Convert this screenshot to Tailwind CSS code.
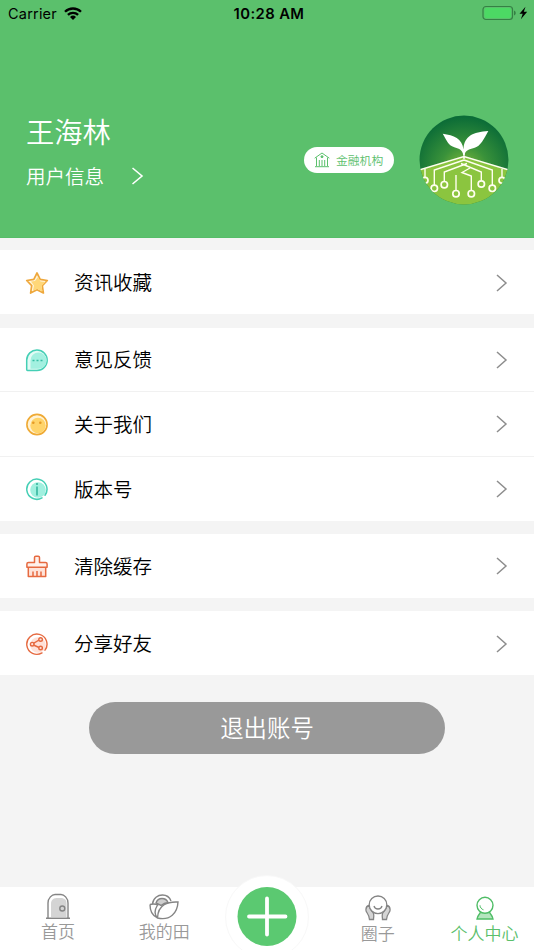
<!DOCTYPE html>
<html lang="zh-CN">
<head>
<meta charset="utf-8">
<meta name="viewport" content="width=device-width, initial-scale=1">
<title>个人中心</title>
<script src="https://cdn.jsdelivr.net/npm/@tailwindcss/browser@4"></script>
</head>
<body class="bg-[#f4f4f4]">
<div class="w-[534px] h-[950px] flex flex-col overflow-hidden font-['Noto_Sans_CJK_SC',sans-serif] text-black">

  <header class="h-[238px] shrink-0 bg-[#5bc06c] border-b border-[#56bd68] flex flex-col">
    <div class="h-7 grid grid-cols-3 items-center pl-2 pr-[6px] font-['Inter',sans-serif]">
      <div class="flex items-center gap-[7px] text-[14.5px] leading-7 tracking-[0.2px]">
        <span>Carrier</span>
        <svg class="w-[18px] h-[13px] -mt-[2px]" viewBox="0 0 18 13" fill="none" stroke="#000" stroke-width="2.3"><path d="M1 4.8a11.4 11.4 0 0 1 16 0M3.9 7.9a7.3 7.3 0 0 1 10.2 0"/><path d="M9 13 6 10a4.3 4.3 0 0 1 6 0z" fill="#000" stroke="none"/></svg>
      </div>
      <div class="text-center pl-[2px] text-[14.8px] font-semibold leading-7 tracking-[0.4px] whitespace-nowrap">10:28 AM</div>
      <div class="flex justify-end -mt-[2px]">
        <svg class="w-[46px] h-[16px]" viewBox="0 0 46 16"><rect x="1" y="1.5" width="29.5" height="13" rx="3" fill="none" stroke="#358044" stroke-width="1.2"/><rect x="2.5" y="3" width="26.5" height="10" rx="1.8" fill="#4cd964"/><path d="M32 5.5c2.3.8 2.3 4.2 0 5z" fill="#358044"/><path d="M43.5 1.8 37.5 8.7h3.2l-1.8 5.5 6.3-7.4h-3.4z" fill="#000"/></svg>
      </div>
    </div>
    <div class="flex items-start pl-[26px] pr-[25px] pt-[82px] text-white">
      <div class="flex-1 font-[350]">
        <div class="text-[28.3px] leading-[42px]">王海林</div>
        <div class="mt-[9px] flex items-center text-[19.5px] leading-[30px]">用户信息
          <svg class="ml-[28px] w-[12px] h-[18px]" viewBox="0 0 12 18" fill="none" stroke="#fff" stroke-width="1.6"><path d="M.5 1 10 9 .5 17"/></svg>
        </div>
      </div>
      <div class="mt-[37px] mr-[25px] w-[90px] h-[26px] rounded-full bg-white flex items-center pl-[10px] text-[#5bc06c] text-[11.8px] leading-[26px] font-[350]">
        <svg class="w-4 h-4 mr-[6px] shrink-0" viewBox="0 0 16 16" fill="none" stroke="#5bc06c" stroke-width="1"><path d="M.7 6.2 8 1l7.3 5.2M2.5 5.5V14M13.5 5.5V14M1 14.7h14M5.300 8v6M8 8v6M10.700 8v6"/><circle cx="8" cy="4.7" r="1" fill="#5bc06c"/></svg>
        金融机构
      </div>
      <svg class="mt-[5px] w-[90px] h-[90px]" viewBox="0 0 90 90">
        <defs>
          <radialGradient id="glow" cx=".5" cy=".6" r=".58"><stop offset="0" stop-color="#86bd3a"/><stop offset=".45" stop-color="#3a923a"/><stop offset="1" stop-color="#0b6c37"/></radialGradient>
          <clipPath id="disc"><circle cx="45" cy="45" r="44.5"/></clipPath>
        </defs>
        <g clip-path="url(#disc)">
          <path d="M0 0h90v90H0z" fill="url(#glow)"/>
          <path d="M0 55 45 42l45 13v35H0z" fill="#8bc53f"/>
          <g fill="none" stroke="#fffef0" stroke-width="1.400">
            <path d="M45 34v10M0 55 45 41.500 90 55M6 54v8M83 54v8M45 45 15.300 55v15M45 45l28.300 10v15M48 48.500 25.300 57v9.500M42 48.500 62.300 57v8.500M37 60v15.500M52.300 75.500V61L43 57.500l8-4.500"/>
            <g stroke-width="1.700"><circle cx="6" cy="65.300" r="3"/><circle cx="15.300" cy="73.300" r="3.200"/><circle cx="25.300" cy="69.700" r="3.200"/><circle cx="37" cy="78.700" r="3.200"/><circle cx="52.300" cy="78.700" r="3.200"/><circle cx="62.300" cy="69" r="3.200"/><circle cx="73.300" cy="73.300" r="3.200"/><circle cx="83" cy="65.300" r="3"/></g>
          </g>
          <path d="M44.300 40c-1-5-4-6.500-8.300-7.500-7-1.800-8.500-7.500-12.300-13.700C35 20.500 43 23 44.500 34.500 45 21 54 17 69.300 16c-4.500 8-7.300 15-14.300 17-5 1.500-8.500 2-9.500 7z" fill="#fff"/>
        </g>
      </svg>
    </div>
  </header>

  <main class="flex-1 flex flex-col pt-3 font-[350]">
    <section class="bg-white h-16 flex items-center pl-[25px] pr-[26px]">
      <svg class="w-6 h-6 mt-[2px]" viewBox="0 0 24 24"><path d="M12 2 15.200 8.400 22.300 9.500 17.300 14.600 18.400 22 12 18.700 5.600 22 6.700 14.600 1.700 9.500 8.800 8.400z" fill="#fff4dc" stroke="#eea73b" stroke-width="1.700" stroke-linejoin="round"/><path d="m13 6 2.500 4.500 5 .500-4 4 1 5.500-5-2.500-4.500 1.500 1-5-3-4 4-.500z" fill="#ffd778"/></svg>
      <span class="ml-[25px] flex-1 text-[19.5px] -mt-px">资讯收藏</span>
      <svg class="w-[12px] h-[18px] mt-px" viewBox="0 0 12 18" fill="none" stroke="#8d8d8d" stroke-width="1.500"><path d="m1 1 9 8-9 8"/></svg>
    </section>

    <div class="mt-[14px] bg-white divide-y divide-[#f1f1f1]">
      <section class="h-16 flex items-center pl-[25px] pr-[26px]">
        <svg class="w-6 h-6" viewBox="0 0 24 24"><path d="M12 2a10.200 10.200 0 1 1 0 20.400H2.500q-.8 0-.8-.8V12A10.200 10.200 0 0 1 12 2z" fill="#e2fbf5" stroke="#45cfb5" stroke-width="1.500"/><path d="M13.500 4.500a8 8 0 0 1 0 16.300H5.500V12.500a8 8 0 0 1 8-8z" fill="#a3f0e0"/><path d="M7.500 12.400h2M11.500 12.400h2M15.500 12.400h2" stroke="#35bda3" stroke-width="1.500"/></svg>
        <span class="ml-[25px] flex-1 text-[19.5px] -mt-px">意见反馈</span>
        <svg class="w-[12px] h-[18px]" viewBox="0 0 12 18" fill="none" stroke="#8d8d8d" stroke-width="1.500"><path d="m1 1 9 8-9 8"/></svg>
      </section>
      <section class="h-[65px] flex items-center pl-[25px] pr-[26px]">
        <svg class="w-6 h-6" viewBox="0 0 24 24"><circle cx="12" cy="12.500" r="10.100" fill="#fff2d4" stroke="#efaa35" stroke-width="1.600"/><circle cx="13" cy="13.500" r="7.700" fill="#ffd46a"/><circle cx="8.300" cy="10.800" r="1.300" fill="#e69a25"/><circle cx="15.300" cy="10.800" r="1.300" fill="#e69a25"/></svg>
        <span class="ml-[25px] flex-1 text-[19.5px] -mt-px">关于我们</span>
        <svg class="w-[12px] h-[18px]" viewBox="0 0 12 18" fill="none" stroke="#8d8d8d" stroke-width="1.500"><path d="m1 1 9 8-9 8"/></svg>
      </section>
      <section class="h-[64px] flex items-center pl-[25px] pr-[26px]">
        <svg class="w-6 h-6" viewBox="0 0 24 24"><circle cx="13" cy="13" r="7.800" fill="#a0f0df"/><path d="M17 20.900A10.100 10.100 0 1 1 20 18.200" fill="none" stroke="#45cfb5" stroke-width="1.500" stroke-linecap="round"/><path d="M12 9.500v9M12 6v2" stroke="#35b79e" stroke-width="1.600"/></svg>
        <span class="ml-[25px] flex-1 text-[19.5px] -mt-px">版本号</span>
        <svg class="w-[12px] h-[18px]" viewBox="0 0 12 18" fill="none" stroke="#8d8d8d" stroke-width="1.500"><path d="m1 1 9 8-9 8"/></svg>
      </section>
    </div>

    <section class="mt-[13px] bg-white h-16 flex items-center pl-[25px] pr-[26px]">
      <svg class="w-6 h-6" viewBox="0 0 24 24" stroke="#e66a40" stroke-width="1.500" stroke-linejoin="round"><path d="M3.300 13v9.500h17.400V13" fill="#ffe3d9"/><path d="M9.500 8.500V3.500q0-1.300 1.300-1.300h2.400q1.300 0 1.300 1.300v5h6q1.600 0 1.600 1.500v3.300H1.900V10q0-1.500 1.600-1.500z" fill="#fff0ea"/><path d="M8 22v-4.500M12 22v-5M16 22v-4.500" fill="none"/></svg>
      <span class="ml-[25px] flex-1 text-[19.5px] -mt-px">清除缓存</span>
      <svg class="w-[12px] h-[18px]" viewBox="0 0 12 18" fill="none" stroke="#8d8d8d" stroke-width="1.500"><path d="m1 1 9 8-9 8"/></svg>
    </section>

    <section class="mt-[13px] bg-white h-16 flex items-center pl-[25px] pr-[26px]">
      <svg class="w-6 h-6 mt-[2px]" viewBox="0 0 24 24" fill="none" stroke="#e66a40" stroke-width="1.400"><circle cx="13" cy="13" r="7.800" fill="#ffe1d8" stroke="none"/><path d="M17 20.900A10.100 10.100 0 1 1 20 18.200" stroke-linecap="round"/><path d="m8.500 11.300 5.500-3.300M8.500 13l5.500 2.500"/><circle cx="7.200" cy="12.200" r="1.800"/><circle cx="15.600" cy="7.500" r="1.800"/><circle cx="15.600" cy="16" r="1.800"/></svg>
      <span class="ml-[25px] flex-1 text-[19.5px]">分享好友</span>
      <svg class="w-[12px] h-[18px] mt-px" viewBox="0 0 12 18" fill="none" stroke="#8d8d8d" stroke-width="1.500"><path d="m1 1 9 8-9 8"/></svg>
    </section>

    <button class="mt-[27px] mx-auto w-[356px] h-[52px] rounded-full bg-[#999] text-white text-[23.4px] leading-[50px] pb-[2px] font-[350]">退出账号</button>
  </main>

  <nav class="relative h-[63px] shrink-0 bg-white grid grid-cols-5 text-[#999] text-[17px] leading-[24px] font-[350]">
    <div class="absolute left-1/2 -translate-x-1/2 -top-[12px] size-[84px] rounded-full bg-white border border-[#f8f8f8]"></div>
    <div class="flex flex-col items-center pt-[6px] pl-[9px]">
      <svg class="w-[26px] h-[27px]" viewBox="0 0 26 27" fill="none" stroke="#858585" stroke-width="1.400"><path d="M6 24V11c0-5 3-6 7-6h4c4 1 4.500 3 4.500 6v13z" fill="#d4d4d4" stroke="none"/><path d="M3 25V10c0-5 4-8.500 7-8.500h6c3 0 7 3.500 7 8.500v15M1 25.300h24"/><circle cx="17.300" cy="15.500" r="2.500"/></svg>
      <span class="-mt-px">首页</span>
    </div>
    <div class="flex flex-col items-center pt-[6px] pl-[8px]">
      <svg class="w-[30px] h-[27px]" viewBox="0 0 30 27" fill="none" stroke="#858585" stroke-width="1.400"><path d="M3.500 11C4 5 9 2 13.500 2c4 0 7 2 8.500 6"/><path d="M7 10c1-3 3.500-4.500 6-4.500s5 1.500 6 4c-3 .500-5 1.500-7 3z" fill="#cfcfcf"/><path d="M1 11.500c3-1 6-.500 8.500.500M1 11.500C1 17 2 22 8 24.500"/><path d="M29 9c-10-.500-20 2-20.500 16C21 28 28.500 20 29 9zM8.500 25C5.500 22 5.500 17 8.500 12"/></svg>
      <span class="-mt-px">我的田</span>
    </div>
    <div class="relative flex justify-center">
      <svg class="w-[60px] h-[60px] -mt-px" viewBox="0 0 60 60"><circle cx="30" cy="30.500" r="29.500" fill="#5bc971"/><path d="M30 12.500v36M12 30.500h36.500" stroke="#fff" stroke-width="3.800" stroke-linecap="round"/></svg>
    </div>
    <div class="flex flex-col items-center pt-[8px] pl-[8px]">
      <svg class="w-[26px] h-[27px]" viewBox="0 0 26 27" fill="none" stroke="#858585" stroke-width="1.300"><path d="M4 10.500C2 11 .700 13 1 15.500c0 2 3.500 4 3.500 9h4c0-3 1-4.500-.500-7-1-1.500-3.500-3-4-7zM22 10.500c2 .500 3.300 2.500 3 5 0 2-3.500 4-3.500 9h-4c0-3-1-4.500.500-7 1-1.500 3.500-3 4-7z" fill="#d4d4d4"/><circle cx="13" cy="9.800" r="8.800" fill="#fff"/><path d="M9 11c1 4 7 4 8 0"/></svg>
      <span class="-mt-px">圈子</span>
    </div>
    <div class="flex flex-col items-center pt-[8px] pl-[8px] text-[#5bc06c]">
      <svg class="w-[26px] h-[27px]" viewBox="0 0 26 27" fill="none" stroke="#4fbd66" stroke-width="1.400"><path d="M8.500 17h9c1 3 3 3 3.500 7H5C5.500 20 7.500 20 8.500 17z" fill="#b5e5bf"/><circle cx="13" cy="10.300" r="8" fill="#fff"/><path d="M8 10.300c0 2 1.500 4 3.500 4.500" stroke-width="1"/></svg>
      <span class="-mt-px">个人中心</span>
    </div>
  </nav>
</div>
</body>
</html>
